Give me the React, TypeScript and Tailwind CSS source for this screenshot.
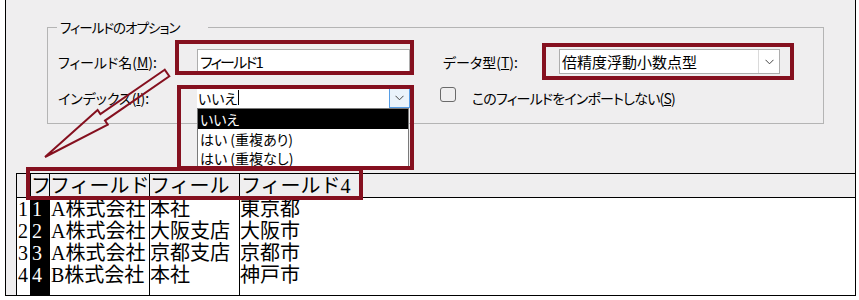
import React from "react";

const ui = "font-['Noto_Sans_CJK_JP',sans-serif] [font-feature-settings:'palt']";
const mincho = "font-['Liberation_Serif','Noto_Sans_CJK_JP',serif]";

function Chevron() {
  return (
    <svg width="9" height="6" viewBox="0 0 9 6" fill="none">
      <path d="M0.5 0.8 L4.5 4.8 L8.5 0.8" stroke="#444" strokeWidth="1" />
    </svg>
  );
}

export default function App() {
  return (
    <div className="relative w-[859px] h-[300px] bg-white overflow-hidden">
      <div className="ml-[5px] w-[851px] h-[296px] border-x border-b border-black bg-[#efeeef] flex flex-col">
        {/* group box */}
        <div className={`relative ml-[41px] mt-[27px] w-[777px] h-[97px] border border-[#b4b4b4] ${ui} text-[14px] text-black`}>
          <span className="absolute left-[9px] -top-[10px] w-[151px] h-[18px] bg-[#efeeef] pl-[3px] leading-[18px] text-[13.5px] tracking-[-1px]">
            フィールドのオプション
          </span>
          <div className="flex items-center pl-[10px] pt-[21px] h-[46px]">
            <div className="w-[139px] leading-none">
              フィールド名(<span className="underline">M</span>):
            </div>
            <div className="w-[213px] h-[25px] bg-white border border-[#adadad] flex items-center pl-[2px] leading-none text-[15px] tracking-[-1.8px]">
              フィールド1
            </div>
            <div className="ml-[33px] w-[116px] leading-none">
              データ型(<span className="underline">T</span>):
            </div>
            <div className="w-[221px] h-[25px] bg-white border border-[#adadad] flex items-center leading-none">
              <span className="flex-1 pl-[2px] text-[15px]">倍精度浮動小数点型</span>
              <span className="w-[21px] h-full border-l border-[#dadada] bg-white flex items-center justify-center">
                <Chevron />
              </span>
            </div>
          </div>
          <div className="flex items-center pl-[10px] mt-[13px] h-[21px]">
            <div className="w-[139px] leading-none">
              インデックス(<span className="underline">I</span>):
            </div>
            <div className="w-[213px] h-[21px] bg-white flex items-center leading-none">
              <span className="pl-[1px]">いいえ</span>
              <span className="w-px h-[15px] bg-black ml-[1px]" />
              <span className="ml-auto w-[21px] h-[21px] border border-[#569de5] bg-[#eaf3fb] flex items-center justify-center">
                <Chevron />
              </span>
            </div>
            <div className="ml-[30px] self-start w-[16px] h-[15px] rounded-[3px] border border-[#6a6a6a]" />
            <div className="ml-[16px] leading-none tracking-[-0.8px]">
              このフィールドをインポートしない(<span className="underline">S</span>)
            </div>
          </div>
        </div>

        {/* table */}
        <div className={`ml-[10px] mt-[49px] flex-1 flex flex-col border-l border-t border-black ${mincho} text-[20px] text-black leading-none`}>
          <div className="flex h-[24px] border-b border-black">
            <div className="w-[14px] border-r border-black" />
            <div className="w-[19px] border-r border-black overflow-hidden whitespace-nowrap flex items-center">フ</div>
            <div className="w-[100px] border-r border-black overflow-hidden whitespace-nowrap flex items-center">フィールド</div>
            <div className="w-[90px] border-r border-black overflow-hidden whitespace-nowrap flex items-center">フィール</div>
            <div className="flex-1 overflow-hidden whitespace-nowrap flex items-center pl-[1px]">フィールド4</div>
          </div>
          <div className="flex flex-1 bg-white">
            <div className="w-[13px] flex flex-col overflow-hidden">
              {["1", "2", "3", "4"].map((n) => (
                <div key={n} className="h-[22px] flex items-center pl-[1px] text-[20px]">{n}</div>
              ))}
            </div>
            <div className="w-[20px] bg-black text-white flex flex-col overflow-hidden">
              {["1", "2", "3", "4"].map((n) => (
                <div key={n} className="h-[22px] flex items-center pl-[2px] text-[20px]">{n}</div>
              ))}
            </div>
            <div className="w-[100px] border-r border-black flex flex-col pl-[1px]">
              {["A株式会社", "A株式会社", "A株式会社", "B株式会社"].map((t, i) => (
                <div key={i} className="h-[22px] flex items-center whitespace-nowrap">{t}</div>
              ))}
            </div>
            <div className="w-[90px] border-r border-black flex flex-col">
              {["本社", "大阪支店", "京都支店", "本社"].map((t, i) => (
                <div key={i} className="h-[22px] flex items-center whitespace-nowrap">{t}</div>
              ))}
            </div>
            <div className="flex-1 flex flex-col">
              {["東京都", "大阪市", "京都市", "神戸市"].map((t, i) => (
                <div key={i} className="h-[22px] flex items-center whitespace-nowrap">{t}</div>
              ))}
            </div>
          </div>
        </div>
      </div>

      {/* dropdown list (menu over content) */}
      <div className={`absolute left-[197px] top-[108px] w-[212px] h-[62px] bg-white border border-[#7a7a7a] ${ui} text-[14px] leading-none`}>
        <div className="h-[20px] bg-black text-white flex items-center pl-[2px]">いいえ</div>
        <div className="h-[19px] flex items-center pl-[2px]">はい&nbsp;(重複あり)</div>
        <div className="h-[19px] flex items-center pl-[2px]">はい&nbsp;(重複なし)</div>
      </div>

      {/* annotation boxes */}
      <div className="absolute left-[175px] top-[40px] w-[239px] h-[35px] border-[4px] border-[#85101f]" />
      <div className="absolute left-[177px] top-[85px] w-[237px] h-[85px] border-[4px] border-[#85101f]" />
      <div className="absolute left-[26px] top-[167px] w-[337px] h-[33px] border-[4px] border-[#85101f]" />
      <div className="absolute left-[542px] top-[43px] w-[252px] h-[37px] border-[4px] border-[#85101f]" />

      {/* arrow annotation */}
      <svg className="absolute left-0 top-0" width="859" height="300" viewBox="0 0 859 300">
        <polygon
          points="164.7,69.7 100.4,114 97.6,109.9 45,157 107.8,124.7 105,120.6 169.3,76.3"
          fill="none"
          stroke="#85101f"
          strokeWidth="2"
          strokeLinejoin="miter"
        />
      </svg>
    </div>
  );
}
